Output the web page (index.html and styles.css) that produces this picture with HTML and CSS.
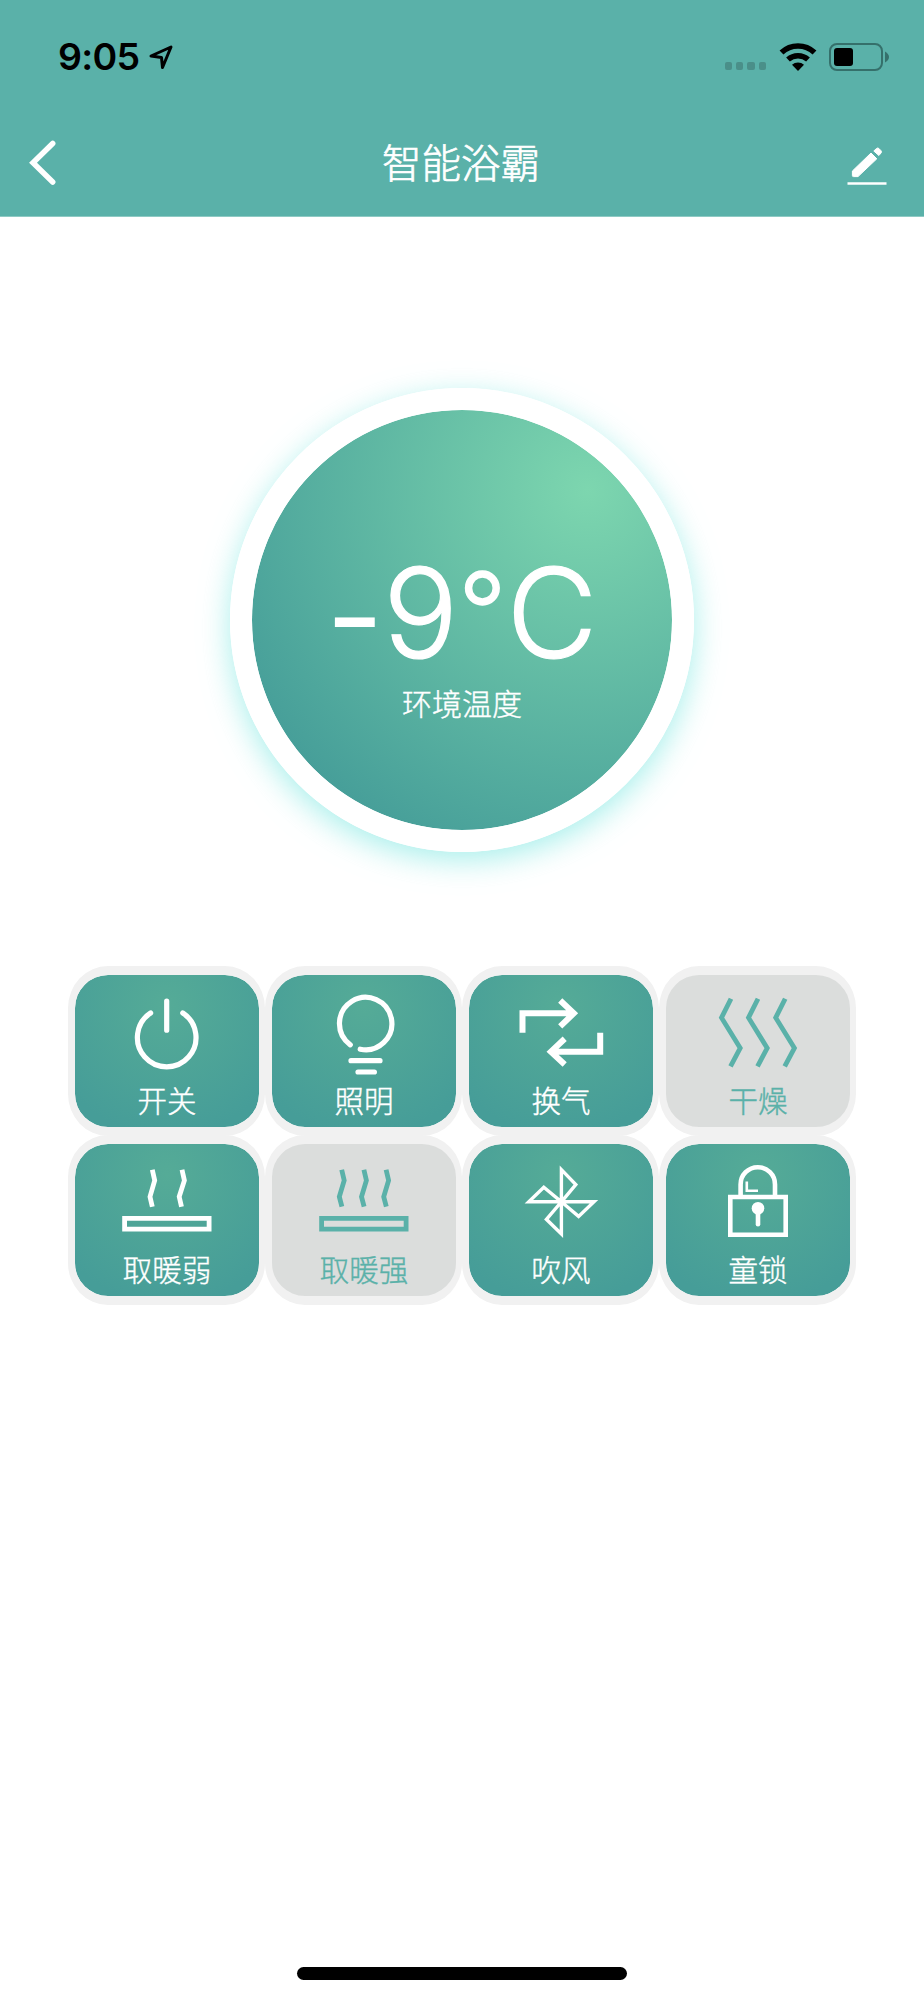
FILE: index.html
```html
<!DOCTYPE html>
<html lang="zh-CN">

<head>
    <meta charset="utf-8">
    <title>智能浴霸</title>
    <link rel="stylesheet" href="styles.css">
</head>

<body>
    <div class="page">
        <header class="header">
            <div class="status_bar">
                <span class="time">9:05</span>
                <svg class="location" width="26" height="28" viewBox="0 0 26 28">
                    <path d="M3 13 L23 4 L14.5 24.5 L13.5 14.5 Z" />
                </svg>
                <div class="signal"><i></i><i></i><i></i><i></i></div>
                <svg class="wifi" width="38" height="30" viewBox="0 0 38 30">
                    <path class="wave" d="M2.5 10.5 A24 24 0 0 1 35.5 10.5" />
                    <path class="wave" d="M9 17.5 A15 15 0 0 1 29 17.5" />
                    <path d="M13 22.8 A9 9 0 0 1 25 22.8 L19 29 Z" />
                </svg>
                <div class="battery"><div class="level"></div></div>
                <svg class="battery_cap" width="4" height="12" viewBox="0 0 4 12">
                    <path d="M0 0.5 Q4 3 4 6 Q4 9 0 11.5 Z" />
                </svg>
            </div>
            <div class="nav_bar">
                <svg class="back" width="30" height="50" viewBox="0 0 30 50">
                    <path d="M24.7 5.5 L5 24.7 L24.7 44" />
                </svg>
                <h1 class="title">智能浴霸</h1>
                <svg class="edit" width="40" height="40" viewBox="0 0 40 40">
                    <path class="pen" d="M5.4 25 L24 7 L29.8 12.8 L11 30.6 H6.4 Q5.4 30.6 5.4 29.6 Z" />
                    <path class="pen" d="M26.8 5 L29.5 2.5 Q30.8 1.4 32 2.6 L34 4.7 Q35 5.8 34 7 L31.9 9.5 Z" />
                    <path d="M0.5 36.2 H39.5 V38.8 H0.5 Z" />
                </svg>
            </div>
        </header>

        <main>
            <div class="dial">
                <div class="temperature">
                    <span class="minus">-</span><span class="digit">9</span><span class="degree">°</span><span class="unit">C</span>
                </div>
                <div class="caption">环境温度</div>
            </div>

            <div class="buttons">
                <button class="btn">
                    <svg class="icon round" viewBox="0 0 184 104">
                        <path d="M75.6 38 A29.3 29.3 0 1 0 107.8 38 M91.7 26 V55.2" />
                    </svg>
                    <span>开关</span>
                </button>
                <button class="btn">
                    <svg class="icon round" viewBox="0 0 184 104">
                        <path d="M78.3 69.8 A26.2 26.2 0 1 1 88.2 74.2 M79 85.7 H108 M86 97 H102.4" />
                    </svg>
                    <span>照明</span>
                </button>
                <button class="btn">
                    <svg class="icon thick" viewBox="0 0 184 104">
                        <path d="M53.5 57.7 V38.3 H105 M91.2 25.5 L104.8 38.3 L91.2 51.3" />
                        <path d="M131.2 57.7 V76.7 H81 M95.7 63.7 L81.9 76.7 L95.7 89.5" />
                    </svg>
                    <span>换气</span>
                </button>
                <button class="btn off">
                    <svg class="icon" viewBox="0 0 184 104">
                        <path d="M65 23.7 L55.5 42.7 L74.2 73 L64.5 91.3 M92 23.7 L82.5 42.7 L101.2 73 L91.5 91.3 M119.2 23.7 L109.7 42.7 L128.4 73 L118.7 91.3" />
                    </svg>
                    <span>干燥</span>
                </button>
                <button class="btn">
                    <svg class="icon" viewBox="0 0 184 104">
                        <path d="M77.3 25.7 L79.7 36.5 L75 52.7 L77.3 62.7 M107 25.7 L109.4 36.5 L104.2 52.7 L106.5 62.7" />
                        <path d="M49.6 74.3 H134.1 V85.1 H49.6 Z" />
                    </svg>
                    <span>取暖弱</span>
                </button>
                <button class="btn off">
                    <svg class="icon" viewBox="0 0 184 104">
                        <path d="M69.7 25.7 L72.2 36.5 L67.3 52.7 L69.9 62.7 M91.9 25.7 L94.4 36.5 L89.5 52.7 L92.1 62.7 M114.1 25.7 L116.6 36.5 L111.7 52.7 L114.3 62.7" />
                        <path d="M49.6 74.3 H134.1 V85.1 H49.6 Z" />
                    </svg>
                    <span>取暖强</span>
                </button>
                <button class="btn">
                    <svg class="icon thin" viewBox="0 0 184 104">
                        <path d="M92.4 57.8 V25.6 L106.8 40.5 L92.4 57.8 H125 L109.6 72.4 L92.4 57.8 V90 L77.4 75.3 L92.4 57.8 H59.8 L74.8 43.3 Z" />
                    </svg>
                    <span>吹风</span>
                </button>
                <button class="btn">
                    <svg class="icon lock" viewBox="0 0 184 104">
                        <path d="M64.3 53 H119.7 V90.7 H64.3 Z M74.6 52 V40.4 A17.2 17.2 0 0 1 109 40.4 V52" />
                        <path class="glint" d="M80.8 37.5 V46.8 H92" />
                        <circle class="keyhole" cx="92" cy="64.3" r="6.3" />
                        <path class="hole" d="M92 66 V80.2" />
                    </svg>
                    <span>童锁</span>
                </button>
            </div>
        </main>

        <div class="home_bar"></div>
    </div>
</body>

</html>
```
FILE: styles.css
```css
* {
    box-sizing: border-box;
}

body {
    margin: 0;
    background-color: #ffffff;
    font-family: "Noto Sans CJK SC", sans-serif;
    font-weight: 300;
}

.page {
    width: 924px;
    height: 2000px;
    display: flex;
    flex-direction: column;
    align-items: center;
}

.header {
    width: 100%;
    height: 217px;
    background-color: #5ab1a9;
    border-bottom: 1px solid #8ecac4;
    color: #ffffff;
    flex-shrink: 0;
}

/* status bar */
.status_bar {
    height: 114px;
    padding: 0 35px 0 58px;
    display: flex;
    align-items: center;
    color: #000000;
}

.time {
    font-family: Inter, sans-serif;
    font-size: 37.5px;
    font-weight: 600;
    line-height: 40px;
    letter-spacing: -0.7px;
    width: 90px;
    white-space: nowrap;
}

.location {
    fill: none;
    stroke: #000000;
    stroke-width: 3;
    stroke-linejoin: round;
}

.signal {
    display: flex;
    gap: 4px;
    margin: 18px 13px 0 auto;
}

.signal i {
    width: 7.3px;
    height: 7.3px;
    border-radius: 2px;
    background-color: #4a8f89;
}

.wifi {
    margin: 0 12px 1px 0;
}

.wifi .wave {
    fill: none;
    stroke: #000000;
    stroke-width: 5.6;
}

.battery {
    width: 54px;
    height: 28px;
    border: 2px solid #35706b;
    border-radius: 8px;
    padding: 3px;
    margin-right: 2px;
}

.level {
    width: 19px;
    height: 18px;
    border-radius: 3px;
    background-color: #000000;
}

.battery_cap {
    fill: #35706b;
}

/* title bar */
.nav_bar {
    height: 98px;
    padding: 0 37px 0 28px;
    display: flex;
    align-items: center;
    justify-content: space-between;
}

.back {
    fill: none;
    stroke: #ffffff;
    stroke-width: 5.5;
    stroke-linecap: round;
}

.title {
    margin: 0 0 5px 17px;
    font-size: 39.5px;
    font-weight: 300;
    line-height: 60px;
    -webkit-text-stroke: 0.7px currentColor;
}

.edit {
    fill: #ffffff;
    margin-top: 6px;
}

.edit .pen {
    stroke: #ffffff;
    stroke-width: 1;
    stroke-linejoin: round;
}

main {
    display: flex;
    flex-direction: column;
    align-items: center;
}

/* temperature dial */
.dial {
    width: 464px;
    height: 464px;
    margin-top: 171px;
    border: 22px solid #ffffff;
    border-radius: 50%;
    background: radial-gradient(circle 410px at 80% 19%, #7dd6af, #449c98) padding-box;
    box-shadow: 0 8px 30px rgba(110, 228, 222, 0.6);
    color: #ffffff;
    text-align: center;
}

.temperature {
    margin-top: 143px;
    height: 120px;
    display: flex;
    justify-content: center;
    font-family: Inter, sans-serif;
    font-size: 125px;
    line-height: 120px;
    white-space: nowrap;
    -webkit-text-stroke: 1.2px currentColor;
}

.minus {
    margin-top: 3px;
    -webkit-text-stroke-width: 1.8px;
}

.degree {
    margin-top: -2px;
    font-size: 106px;
    -webkit-text-stroke-width: 1.4px;
}

.caption {
    margin-top: 7px;
    font-size: 30px;
    line-height: 44px;
    -webkit-text-stroke: 0.4px currentColor;
}

/* function buttons */
.buttons {
    margin: 114px 0 0;
    display: grid;
    grid-template-columns: repeat(4, 197px);
    grid-auto-rows: 169px;
}

.btn {
    height: 170px;
    padding: 0;
    border: solid #f1f1f1;
    border-width: 9px 6px 9px 7px;
    border-radius: 40px / 42px;
    background: radial-gradient(circle 130px at 50% 20%, #55ab97, #469d98) padding-box;
    color: #ffffff;
    font-family: inherit;
    font-size: 29.5px;
    font-weight: 300;
    display: flex;
    flex-direction: column;
    align-items: center;
    cursor: pointer;
}

.btn.off {
    background: #dbdddc;
    color: #5ab1a9;
}

.btn span {
    line-height: 44px;
    margin-top: -2px;
    -webkit-text-stroke: 0.4px currentColor;
}

.icon {
    width: 184px;
    height: 104px;
    flex-shrink: 0;
    fill: none;
    stroke: currentColor;
    stroke-width: 4.8;
    stroke-miterlimit: 10;
}

.icon.round {
    stroke-width: 5.2;
    stroke-linecap: round;
}

.icon.thick {
    stroke-width: 6;
}

.icon.thin {
    stroke-width: 3.4;
}

.icon.lock {
    stroke-width: 4.6;
}

.lock .glint {
    stroke-width: 2.6;
}

.lock .keyhole {
    fill: currentColor;
    stroke: none;
}

.lock .hole {
    stroke-linecap: round;
}

.home_bar {
    width: 330px;
    height: 13px;
    margin: auto 0 20px;
    border-radius: 7px;
    background-color: #000000;
}
```
